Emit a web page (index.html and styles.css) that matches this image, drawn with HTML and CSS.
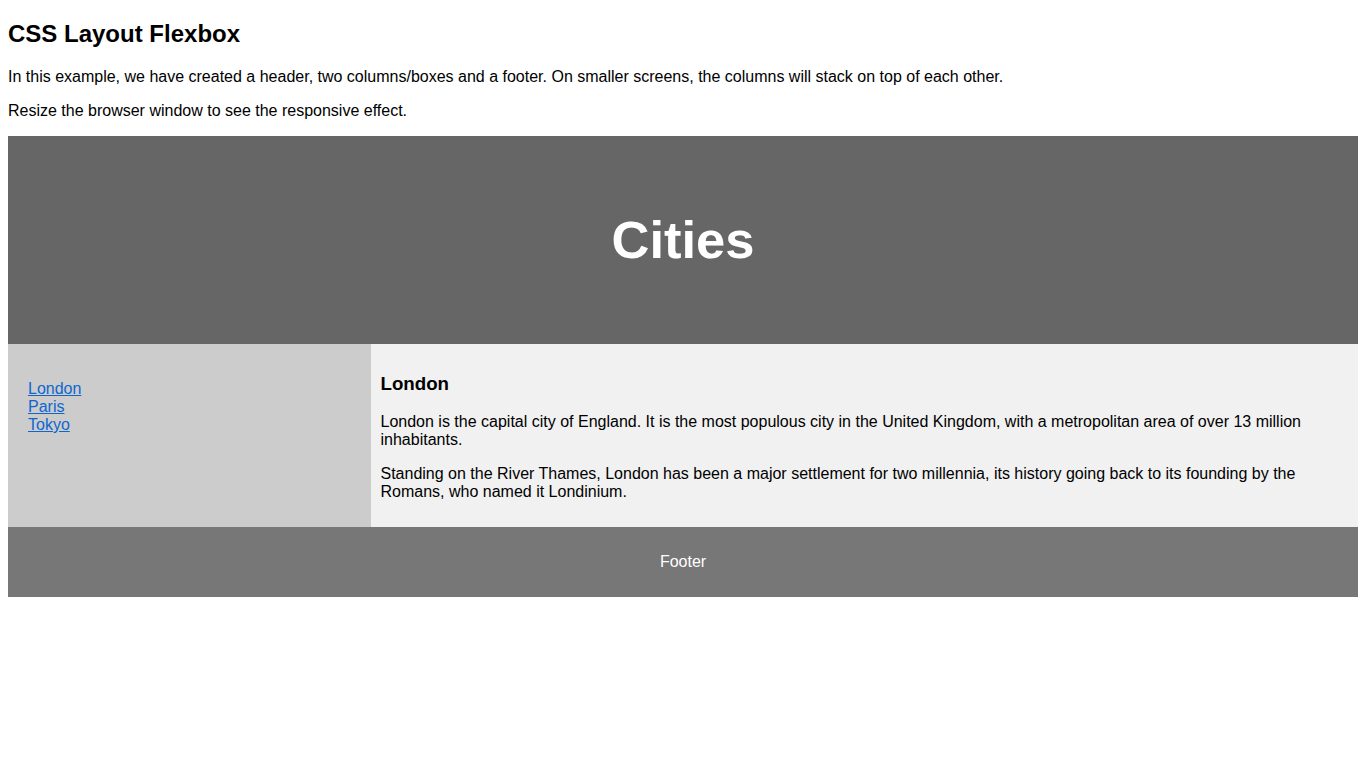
FILE: index.html
```html
<!DOCTYPE html>
<html>
<head>
<meta charset="utf-8">
<title>CSS Layout Flexbox</title>
<link rel="stylesheet" href="styles.css">
</head>
<body>
<h2 class="title">CSS Layout Flexbox</h2>
<p>In this example, we have created a header, two columns/boxes and a footer. On smaller screens, the columns will stack on top of each other.</p>
<p>Resize the browser window to see the responsive effect.</p>

<header class="site-header">
  <h2>Cities</h2>
</header>

<section class="main">
  <nav class="side">
    <ul>
      <li><a href="#">London</a></li>
      <li><a href="#">Paris</a></li>
      <li><a href="#">Tokyo</a></li>
    </ul>
  </nav>
  <article class="content">
    <h3>London</h3>
    <p>London is the capital city of England. It is the most populous city in the United Kingdom, with a metropolitan area of over 13 million inhabitants.</p>
    <p>Standing on the River Thames, London has been a major settlement for two millennia, its history going back to its founding by the Romans, who named it Londinium.</p>
  </article>
</section>

<footer class="site-footer">
  <p>Footer</p>
</footer>
</body>
</html>
```

FILE: styles.css
```css
* {
  box-sizing: border-box;
}

body {
  margin: 0;
  padding: 0 8px 8px;
  font-family: "Liberation Sans", Arial, Helvetica, sans-serif;
  color: #000;
  background: #fff;
}

.title {
  font-size: 1.5em;
  margin: 0.83em 0;
}

.site-header {
  background-color: #666;
  padding: 30px;
  text-align: center;
  font-size: 35px;
  color: #fff;
}

.site-header h2 {
  font-size: 1.5em;
  margin: 0.83em 0;
}

.main {
  display: flex;
}

.side {
  flex: 1;
  background: #ccc;
  padding: 20px;
}

.side ul {
  list-style-type: none;
  padding: 0;
  margin: 16px 0;
}

.side a {
  color: #0e66cf;
}

.content {
  flex: 3;
  background-color: #f1f1f1;
  padding: 10px;
}

.content h3 {
  font-size: 1.17em;
  margin: 1em 0;
}

.site-footer {
  background-color: #777;
  padding: 10px;
  text-align: center;
  color: #fff;
}
```
